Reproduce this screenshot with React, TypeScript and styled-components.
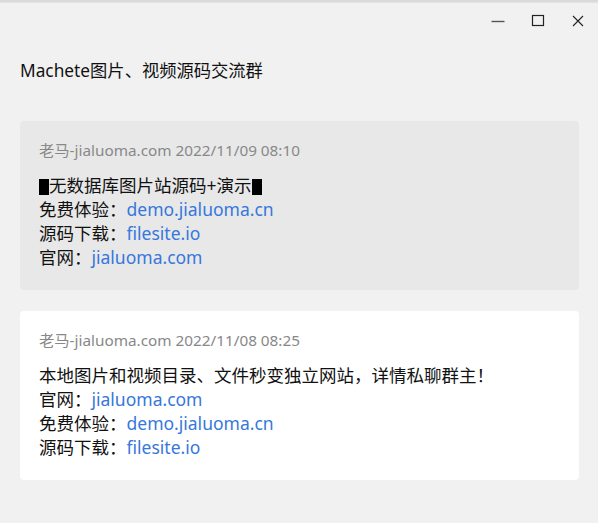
import React from "react";
import styled, { createGlobalStyle } from "styled-components";

const Global = createGlobalStyle`
  html, body { margin: 0; padding: 0; background: #f1f1f1; }
  body { font-family: "Noto Sans", "Noto Sans CJK SC", sans-serif; color: #111; }
`;

const Window = styled.div`
  width: 598px;
  height: 523px;
  background: #f1f1f1;
  display: flex;
  flex-direction: column;
  overflow: hidden;
`;

const TopEdge = styled.div`
  height: 3px;
  background: linear-gradient(#d6d6d6, #e4e4e4);
`;

const TitleBar = styled.div`
  height: 36px;
  display: flex;
  justify-content: flex-end;
  align-items: center;
  padding-right: 1px;
  gap: 2px;
`;

const CtrlButton = styled.button`
  width: 38px;
  height: 36px;
  border: none;
  background: transparent;
  padding: 0;
  display: flex;
  align-items: center;
  justify-content: center;
  color: #222;
`;

const Title = styled.h1`
  margin: 0;
  padding: 19px 0 0 20px;
  height: 27px;
  font-size: 17.3px;
  font-weight: 400;
  line-height: 26px;
  color: #111;
`;

const List = styled.div`
  display: flex;
  flex-direction: column;
  gap: 21px;
  padding: 36px 19px 0 20px;
`;

const Card = styled.div<{ $active?: boolean }>`
  background: ${(p) => (p.$active ? "#e8e8e8" : "#ffffff")};
  border-radius: 4px;
  padding: 19px 20px 21px 19px;
`;

const Meta = styled.div`
  font-size: 15.3px;
  line-height: 20px;
  color: #888888;
  margin-bottom: 13px;
`;

const Line = styled.div`
  font-size: 17.5px;
  line-height: 24px;
  color: #111;
  white-space: nowrap;
`;

const Link = styled.a`
  color: #3677dd;
  text-decoration: none;
`;

const Block = styled.span`
  display: inline-block;
  width: 10px;
  height: 16px;
  background: #000;
  vertical-align: -3px;
`;

export default function App() {
  return (
    <Window>
      <Global />
      <TopEdge />
      <TitleBar>
        <CtrlButton aria-label="minimize">
          <svg width="14" height="14" viewBox="0 0 14 14">
            <path d="M0.5 7.5h13" stroke="#555" strokeWidth="1.4" />
          </svg>
        </CtrlButton>
        <CtrlButton aria-label="maximize">
          <svg width="14" height="14" viewBox="0 0 14 14">
            <rect x="1.5" y="1.5" width="11" height="10" fill="none" stroke="#222" strokeWidth="1.2" />
          </svg>
        </CtrlButton>
        <CtrlButton aria-label="close">
          <svg width="14" height="14" viewBox="0 0 14 14">
            <path d="M2 2l10 10M12 2L2 12" stroke="#222" strokeWidth="1.1" />
          </svg>
        </CtrlButton>
      </TitleBar>
      <Title>Machete图片、视频源码交流群</Title>
      <List>
        <Card $active>
          <Meta>老马-jialuoma.com 2022/11/09 08:10</Meta>
          <Line><Block />无数据库图片站源码+演示<Block /></Line>
          <Line>免费体验：<Link>demo.jialuoma.cn</Link></Line>
          <Line>源码下载：<Link>filesite.io</Link></Line>
          <Line>官网：<Link>jialuoma.com</Link></Line>
        </Card>
        <Card>
          <Meta>老马-jialuoma.com 2022/11/08 08:25</Meta>
          <Line>本地图片和视频目录、文件秒变独立网站，详情私聊群主！</Line>
          <Line>官网：<Link>jialuoma.com</Link></Line>
          <Line>免费体验：<Link>demo.jialuoma.cn</Link></Line>
          <Line>源码下载：<Link>filesite.io</Link></Line>
        </Card>
      </List>
    </Window>
  );
}
